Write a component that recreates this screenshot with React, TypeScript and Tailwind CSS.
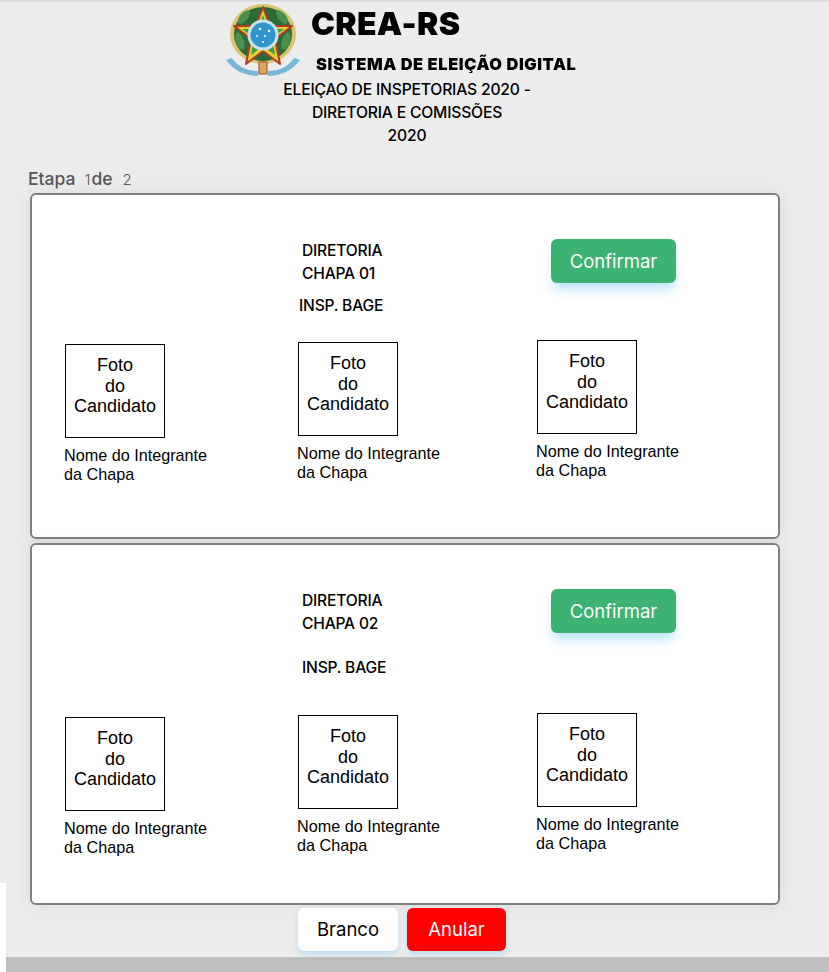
const poppins = "font-['Inter','Open_Sans',sans-serif]";
const arial = "font-['Liberation_Sans',Arial,sans-serif]";

function Brasao() {
  // brasao da republica, desenhado a mao
  return (
    <svg width="75" height="76" viewBox="0 0 75 76" className="block blur-[0.5px]">
      <ellipse cx="37" cy="31" rx="33" ry="30" fill="#d8c56f" />
      <ellipse cx="37" cy="31" rx="29" ry="27" fill="#2c6b38" />
      <g fill="#4d8f4f">
        <ellipse cx="14" cy="38" rx="4" ry="9" transform="rotate(-18 14 38)" />
        <ellipse cx="60" cy="38" rx="4" ry="9" transform="rotate(18 60 38)" />
        <ellipse cx="18" cy="14" rx="4" ry="8" transform="rotate(40 18 14)" />
        <ellipse cx="56" cy="14" rx="4" ry="8" transform="rotate(-40 56 14)" />
      </g>
      <path d="M37 4 L44 23 L66 23 L49 36 L54 61 L37 48 L20 61 L25 36 L8 23 L30 23 Z" fill="#e6cf2e" stroke="#b23a2b" strokeWidth="2" strokeLinejoin="round" />
      <path d="M37 12 L42 26 L58 26 L46 35 L49 52 L37 43 L25 52 L28 35 L16 26 L32 26 Z" fill="#3c9b48" />
      <circle cx="37" cy="32" r="15.5" fill="#c9e3ec" />
      <circle cx="37" cy="32" r="12.5" fill="#2f95cc" />
      <g fill="#ffffff">
        <circle cx="34" cy="26" r="1.3" />
        <circle cx="43" cy="28" r="1.3" />
        <circle cx="39" cy="33" r="1.1" />
        <circle cx="31" cy="33" r="1" />
        <circle cx="37" cy="39" r="1.1" />
      </g>
      <rect x="33" y="59" width="8" height="12" fill="#d3ad55" stroke="#b23a2b" />
      <path d="M0 57 C8 68 20 73 32 73 L32 68 C21 68 12 64 6 55 Z" fill="#74b9dc" />
      <path d="M74 57 C66 68 54 73 42 73 L42 68 C53 68 62 64 68 55 Z" fill="#74b9dc" />
    </svg>
  );
}

function Integrante({ top }: { top: string }) {
  return (
    <div className={`w-[150px] ${top} ${arial} text-black`}>
      <div className="ml-px w-[100px] h-[94px] border border-black pt-[10px] text-center text-[18px] leading-[20.5px]">
        Foto
        <br />
        do
        <br />
        Candidato
      </div>
      <p className="mt-2 text-[16.2px] leading-[19px]">
        Nome do Integrante
        <br />
        da Chapa
      </p>
    </div>
  );
}

function Card({ chapa, height, insp, rowTop }: { chapa: string; height: string; insp: string; rowTop: string }) {
  return (
    <section className={`mx-[30px] w-[750px] ${height} rounded-md border-2 border-[#808080] bg-white shadow-[0_0_16px_rgba(0,0,0,0.08)]`}>
      <div className="flex pt-[44px]">
        <div className="ml-[270px] w-[249px]">
          <h2 className={`${poppins} text-[15.6px] font-medium leading-[23px] tracking-[-0.2px] text-black`}>
            DIRETORIA
            <br />
            {chapa}
          </h2>
        </div>
        <button className={`${poppins} h-[44px] w-[125px] rounded-md bg-[#3cb371] pt-0.5 text-[18.5px] text-white shadow-[0_8px_12px_-2px_rgba(135,206,250,0.6)]`}>
          Confirmar
        </button>
      </div>
      <p className={`${poppins} ${insp} text-[15.6px] font-medium leading-[23px] tracking-[-0.2px] text-black`}>
        INSP. BAGE
      </p>
      <div className={`flex ${rowTop} pl-[32px]`}>
        <Integrante top="mt-1" />
        <div className="w-[83px]" />
        <Integrante top="mt-0.5" />
        <div className="w-[89px]" />
        <Integrante top="mt-0" />
      </div>
    </section>
  );
}

export default function App() {
  return (
    <div className="relative h-[972px] w-[829px] overflow-hidden bg-[#ececec]">
      <div className="h-0.5 bg-[#dcdce0]" />
      <header className="h-[157px]">
        <div className="flex h-[76px] pl-[226px]">
          <div className="pt-px">
            <Brasao />
          </div>
          <div className={`${poppins} ml-[10px] text-black blur-[0.3px]`}>
            <div className="mt-[5px] h-[33px] text-[32px] font-black leading-[33px] tracking-[0.3px]">CREA-RS</div>
            <div className="ml-[5px] mt-[14px] text-[16.4px] font-black leading-[20px] tracking-[0.6px]">SISTEMA DE ELEIÇÃO DIGITAL</div>
          </div>
        </div>
        <h1 className={`${poppins} w-[814px] text-center text-[15.7px] font-medium leading-[23px] tracking-[-0.2px] text-black`}>
          ELEIÇAO DE INSPETORIAS 2020 -
          <br />
          DIRETORIA E COMISSÕES
          <br />
          2020
        </h1>
      </header>
      <div className={`${poppins} h-[34px] pl-[28px] pt-[9px] text-[17.5px] leading-[22px] text-[#555555]`}>
        <span className="font-medium">Etapa</span>
        <span className="ml-[9px] text-[15px] font-light">1</span>
        <span className="ml-px font-medium">de</span>
        <span className="ml-[10px] text-[15px] font-light">2</span>
      </div>
      <Card chapa="CHAPA 01" height="h-[346px]" insp="ml-[267px] mt-[9px]" rowTop="mt-[23px]" />
      <div className="h-1" />
      <Card chapa="CHAPA 02" height="h-[362px]" insp="ml-[270px] mt-[21px]" rowTop="mt-[34px]" />
      <div className="mt-[3px] flex justify-center gap-[9px] pr-[1px]">
        <button className={`${poppins} ml-[-24px] h-[43px] w-[100px] rounded-md bg-white text-[18.5px] text-black shadow-[0_3px_5px_rgba(135,206,250,0.5)]`}>
          Branco
        </button>
        <button className={`${poppins} h-[43px] w-[99px] rounded-md bg-[#ff0000] text-[18.5px] text-white shadow-[0_3px_5px_rgba(135,206,250,0.5)]`}>
          Anular
        </button>
      </div>
      <div className="mt-[6px] h-[15px] bg-[#bfbfbf]" />
      <div className="absolute bottom-0 left-0 h-[89px] w-[6px] bg-white" />
    </div>
  );
}
